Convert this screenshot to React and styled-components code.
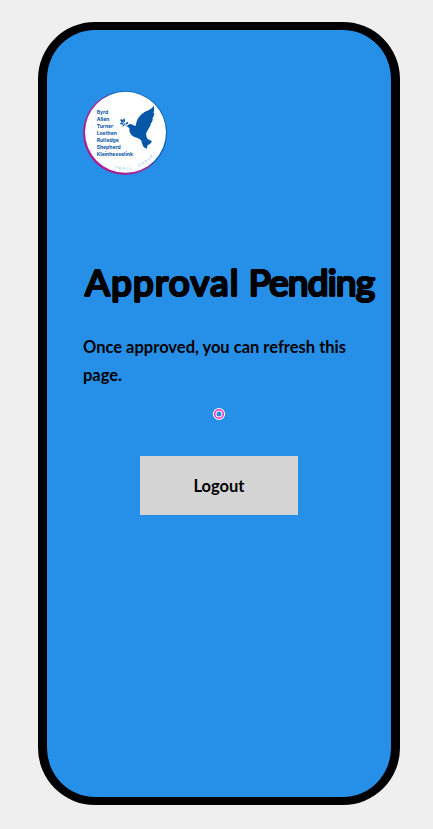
import React from 'react';
import styled, { createGlobalStyle } from 'styled-components';

const GlobalStyle = createGlobalStyle`
  *, *::before, *::after { box-sizing: border-box; }
  body { margin: 0; background: #efefef; }
`;

const Page = styled.div`
  display: flex;
  justify-content: center;
  height: 829px;
  padding: 22px 0 24px 5px;
  overflow: hidden;
  color: #000;
  font-family: Lato, 'Open Sans', sans-serif;
`;

const Phone = styled.main`
  display: flex;
  flex-direction: column;
  width: 362px;
  height: 783px;
  padding: 61px 36px 0;
  border: solid #000;
  border-width: 8px 9px;
  border-radius: 57px;
  background: #2690e9;
`;

const Logo = styled.svg`
  display: block;
  width: 84px;
  height: 84px;
  flex: none;
`;

/* Even shadows around each glyph give the heading its soft, rounded strokes. */
const Title = styled.h1`
  display: flex;
  gap: 9px;
  margin: 82px 0 0 2px;
  font-size: 37px;
  line-height: 50px;
  font-weight: 400;
  white-space: nowrap;
  text-shadow:
    1.2px 0 #000, -1.2px 0 #000, 0 1.2px #000, 0 -1.2px #000,
    0.85px 0.85px #000, -0.85px 0.85px #000, 0.85px -0.85px #000, -0.85px -0.85px #000;
`;

const Word = styled.span`
  letter-spacing: ${({ $tracking }) => $tracking}px;
`;

const Message = styled.p`
  margin: 26px 0 0;
  width: 272px;
  font-size: 16.5px;
  line-height: 28px;
  font-weight: 700;
`;

const Spinner = styled.svg`
  display: block;
  width: 14px;
  height: 14px;
  flex: none;
  align-self: center;
  margin-top: 17.5px;
`;

const LogoutButton = styled.button`
  align-self: center;
  width: 158px;
  height: 59px;
  flex: none;
  margin-top: 35.5px;
  padding: 0;
  border: 0;
  background: #d4d4d4;
  color: #000;
  font: 700 16.5px/28px Lato, 'Open Sans', sans-serif;
`;

const names = ['Byrd', 'Allen', 'Turner', 'Loethen', 'Rutledge', 'Shepherd', 'Kleinhesselink'];

function GroupLogo() {
  return (
    <Logo viewBox="15 15 252 252" role="img" aria-label="Small Group">
      <defs>
        <linearGradient id="ring" x1="0" y1="0.85" x2="1" y2="0.15">
          <stop offset="0" stopColor="#b5168c" />
          <stop offset="0.48" stopColor="#96309f" />
          <stop offset="0.6" stopColor="#1263b4" />
          <stop offset="1" stopColor="#0757a8" />
        </linearGradient>
        <path id="arc-small" d="M109 247 A111 111 0 0 0 174 246" />
        <path id="arc-group" d="M182 243 A111 111 0 0 0 238 194" />
      </defs>
      <circle cx="141" cy="141" r="126" fill="url(#ring)" />
      <circle cx="142.5" cy="139" r="121.5" fill="#fff" />
      <g fill="#0757a8" fontFamily="Inter, sans-serif" fontSize="15" fontWeight="700">
        {names.map((name, i) => (
          <text key={name} x="56" y={84 + i * 21} letterSpacing="0.1">{name}</text>
        ))}
      </g>
      <g fill="#0757a8">
        <path d="M147 122 C150 114 158 112 165 117 C170 120 172 121 174 116 C176 97 188 82 208 74 C217 70 224 65 227 59 C229 67 229 75 226 82 L229 80 C228 89 226 94 222 99 L225 98 C223 107 220 111 216 115 L219 114 C215 124 209 132 205 140 C204 146 205 153 209 159 L222 166 C219 172 215 176 209 177 L206 188 C198 185 193 180 190 164 C183 156 176 156 169 153 C158 148 153 140 154 127 C152 124 150 122 147 122Z" />
        <path d="M126 101 Q135 97 138 109 Q130 110 126 101Z M137 96 Q145 103 139 109 Q133 103 137 96Z M125 112 Q132 107 137 113 Q132 119 125 112Z M133 122 Q134 113 141 114 Q141 121 133 122Z M143 115 Q144 106 151 108 Q151 116 143 115Z" />
        <path d="M129 104 Q139 109 149 121" fill="none" stroke="#0757a8" strokeWidth="2" />
      </g>
      <g fill="#86bfe2" fontFamily="Inter, sans-serif" fontSize="11.5">
        <text letterSpacing="3.6"><textPath href="#arc-small">SMALL</textPath></text>
        <text letterSpacing="3.6"><textPath href="#arc-group">GROUP</textPath></text>
      </g>
    </Logo>
  );
}

export default function App() {
  return (
    <>
      <GlobalStyle />
      <Page>
        <Phone>
          <GroupLogo />
          <Title>
            <Word $tracking={1.15}>Approval</Word>
            <Word $tracking={-0.75}>Pending</Word>
          </Title>
          <Message>Once approved, you can refresh this page.</Message>
          <Spinner viewBox="0 0 14 14" aria-label="Loading">
            <circle cx="7" cy="7" r="4.3" fill="none" stroke="#fff" strokeWidth="3.6" />
            <circle cx="7" cy="7" r="4.3" fill="none" stroke="#f32abb" strokeWidth="1.5" />
          </Spinner>
          <LogoutButton type="button">Logout</LogoutButton>
        </Phone>
      </Page>
    </>
  );
}
